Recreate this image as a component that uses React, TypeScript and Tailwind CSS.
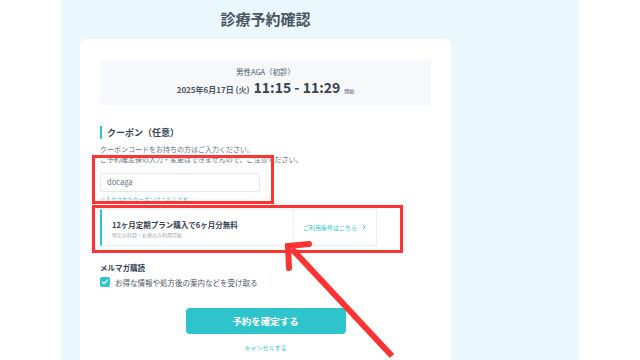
import { Check, ChevronRight } from 'lucide-react';

const font = { fontFamily: '"Noto Sans CJK JP", "Noto Sans", sans-serif' };

function InfoBox() {
  return (
    <div className="flex h-[45px] flex-col items-center justify-center bg-[#f6f8fb] text-[#4b5563]">
      <p className="text-[7.5px] leading-[10px]">男性AGA（初診）</p>
      <p className="mt-[2px] flex items-baseline gap-[4px] leading-[16px]">
        <span className="text-[8px] font-bold">2025年6月17日 (火)</span>
        <span className="text-[14px] font-bold text-[#374151]">11:15 - 11:29</span>
        <span className="text-[5px]">開始</span>
      </p>
    </div>
  );
}

function CouponSection() {
  return (
    <div className="mt-[21px]">
      <div className="flex items-center gap-[5px]">
        <span className="h-[13px] w-[2px] bg-[#2ec4cc]" />
        <h2 className="text-[9px] font-bold text-[#374151]">クーポン（任意）</h2>
      </div>
      <p className="mt-[4px] text-[7px] leading-[10px] text-[#6b7280]">クーポンコードをお持ちの方はご入力ください。</p>
      <p className="text-[7px] leading-[10px] text-[#6b7280]">ご予約確定後の入力・変更はできませんので、ご注意ください。</p>
      <div className="mt-[9px] flex h-[19px] w-[160px] items-center rounded-[2px] border border-[#e5e7eb] px-[6px] text-[7.5px] text-[#6b7280]">
        docaga
      </div>
      <p className="mt-[4px] text-[5.5px] leading-[8px] text-[#2ec4cc]">※入力されたクーポンはこちらです</p>
      <div className="mt-[5px] flex h-[37px] w-[277px] border border-l-2 border-[#eceff2] border-l-[#2ec4cc] bg-white">
        <div className="flex flex-1 flex-col justify-center pl-[10px] pt-[3px]">
          <p className="text-[7.5px] font-bold leading-[11px] text-[#374151]">12ヶ月定期プラン購入で6ヶ月分無料</p>
          <p className="mt-[1px] text-[5px] leading-[8px] text-[#9ca3af]">特定の科目・お薬のみ利用可能</p>
        </div>
        <div className="flex w-[83px] items-center whitespace-nowrap border-l border-dashed border-[#e5e7eb] pl-[9px] text-[6px] text-[#2ec4cc]">
          ご利用条件はこちら
          <ChevronRight size={8} strokeWidth={3} className="ml-[3px]" />
        </div>
      </div>
    </div>
  );
}

function Newsletter() {
  return (
    <div className="mt-[16px]">
      <p className="text-[7.5px] font-bold text-[#374151]">メルマガ購読</p>
      <label className="mt-[4px] flex items-center gap-[5px] text-[7.5px] text-[#4b5563]">
        <span className="flex h-[10px] w-[10px] items-center justify-center rounded-[2px] bg-[#2ec4cc]">
          <Check size={8} strokeWidth={3.5} className="text-white" />
        </span>
        お得な情報や処方後の案内などを受け取る
      </label>
    </div>
  );
}

function Annotations() {
  return (
    <svg className="pointer-events-none absolute left-0 top-0" width="640" height="360">
      <rect x="93.5" y="156.5" width="179" height="46" fill="none" stroke="#ff3333" strokeWidth="3" />
      <rect x="93.5" y="206.5" width="308" height="45" fill="none" stroke="#ff3333" strokeWidth="3" />
      <line x1="392" y1="356" x2="292" y2="249" stroke="#ff3333" strokeWidth="6" />
      <polyline points="289,268 288,246 309,244" fill="none" stroke="#ff3333" strokeWidth="6" strokeLinecap="round" />
    </svg>
  );
}

export default function App() {
  return (
    <div className="relative flex h-[360px] w-[640px] overflow-hidden bg-white" style={font}>
      <div className="w-[61px]" />
      <div className="w-[518px] bg-[#eaf7fd]">
        <div className="ml-[19px] w-[371px]">
          <h1 className="h-[39px] pt-[8px] text-center text-[15px] font-bold leading-[22px] text-[#4b5563]">診療予約確認</h1>
          <div className="h-[330px] rounded-t-[6px] bg-white px-[20px] pt-[21px]">
            <InfoBox />
            <CouponSection />
            <Newsletter />
            <div className="mt-[20px] flex flex-col items-center">
              <button className="h-[26px] w-[160px] rounded-[4px] bg-[#2ec4cc] text-[9.5px] font-bold text-white">
                予約を確定する
              </button>
              <p className="mt-[9px] text-[6px] text-[#2ec4cc]">キャンセルする</p>
            </div>
          </div>
        </div>
      </div>
      <Annotations />
    </div>
  );
}
